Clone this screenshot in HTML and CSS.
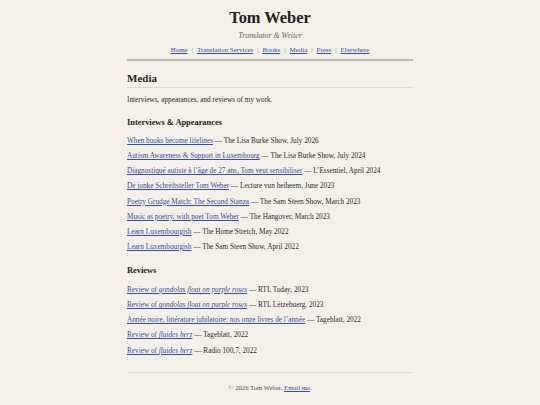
FILE: index.html
```html
<!DOCTYPE html>
<html lang="en">
<head>
<meta charset="utf-8">
<title>Media — Tom Weber</title>
<link rel="stylesheet" href="styles.css">
</head>
<body>
<div class="page">
  <header class="site-header">
    <h1 class="site-title">Tom Weber</h1>
    <p class="tagline">Translator &amp; Writer</p>
    <nav class="nav">
      <a href="#">Home</a><span class="sep">|</span><a href="#">Translation Services</a><span class="sep">|</span><a href="#">Books</a><span class="sep">|</span><a href="#">Media</a><span class="sep">|</span><a href="#">Press</a><span class="sep">|</span><a href="#">Elsewhere</a>
    </nav>
  </header>
  <main class="content">
    <h2 class="page-title">Media</h2>
    <p class="intro">Interviews, appearances, and reviews of my work.</p>
    <h3 class="section-title">Interviews &amp; Appearances</h3>
    <ul class="items">
      <li><a href="#">When books become lifelines</a> — The Lisa Burke Show, July 2026</li>
      <li><a href="#">Autism Awareness &amp; Support in Luxembourg</a> — The Lisa Burke Show, July 2024</li>
      <li><a href="#">Diagnostiqué autiste à l’âge de 27 ans, Tom veut sensibiliser</a> — L’Essentiel, April 2024</li>
      <li><a href="#">De jonke Schrëftsteller Tom Weber</a> — Lecture vun heiheem, June 2023</li>
      <li><a href="#">Poetry Grudge Match: The Second Stanza</a> — The Sam Steen Show, March 2023</li>
      <li><a href="#">Music as poetry, with poet Tom Weber</a> — The Hangover, March 2023</li>
      <li><a href="#">Learn Luxembourgish</a> — The Home Stretch, May 2022</li>
      <li><a href="#">Learn Luxembourgish</a> — The Sam Steen Show, April 2022</li>
    </ul>
    <h3 class="section-title reviews">Reviews</h3>
    <ul class="items reviews-list">
      <li><a href="#">Review of <em>gondolas float on purple roses</em></a> — RTL Today, 2023</li>
      <li><a href="#">Review of <em>gondolas float on purple roses</em></a> — RTL Lëtzebuerg, 2023</li>
      <li><a href="#">Année noire, littérature jubilatoire: nos onze livres de l’année</a> — Tageblatt, 2022</li>
      <li><a href="#">Review of <em>fluides herz</em></a> — Tageblatt, 2022</li>
      <li><a href="#">Review of <em>fluides herz</em></a> — Radio 100,7, 2022</li>
    </ul>
  </main>
  <footer class="site-footer">
    <p>© 2026 Tom Weber. <a href="#">Email me</a>.</p>
  </footer>
</div>
</body>
</html>
```

FILE: styles.css
```css
html, body {
  margin: 0;
  padding: 0;
}
body {
  background: #f3f0e9;
  color: #2b2b2b;
  font-family: "Liberation Serif", "DejaVu Serif", serif;
  font-size: 7.25px;
  line-height: 1.5;
}
a {
  color: #3a4c9e;
  text-decoration: underline;
}
.page {
  width: 286px;
  margin: 0 auto;
}
.site-header {
  text-align: center;
  padding-top: 8px;
  padding-bottom: 4px;
  border-bottom: 2px solid #bdb9b1;
}
.site-title {
  margin: 0;
  font-size: 16.4px;
  line-height: 20px;
  font-weight: bold;
  color: #222;
}
.tagline {
  margin: 3px 0 0;
  font-size: 7.9px;
  font-style: italic;
  color: #666;
  line-height: 10px;
}
.nav {
  margin-top: 4px;
  font-size: 6.9px;
  line-height: 10px;
}
.sep {
  color: #777;
  margin: 0 4px;
}
.content {
  padding-top: 11px;
}
.page-title {
  margin: 0;
  font-size: 11px;
  line-height: 13px;
  padding-bottom: 2px;
  border-bottom: 1px solid #dcd8d0;
  color: #222;
}
.intro {
  margin: 7px 0 0;
  line-height: 10px;
}
.section-title {
  margin: 12px 0 0;
  font-size: 8.4px;
  line-height: 11px;
  color: #222;
}
.section-title.reviews {
  margin-top: 13px;
}
.items {
  list-style: none;
  padding: 0;
  margin: 8px 0 0;
}
.items.reviews-list {
  margin-top: 9px;
}
.items li {
  line-height: 10px;
  margin-bottom: 5.15px;
}
.site-footer {
  margin-top: 16px;
  border-top: 1px solid #dcd8d0;
  text-align: center;
  color: #555;
  font-size: 6.7px;
}
.site-footer p {
  margin: 10px 0 0;
  line-height: 10px;
}
```
